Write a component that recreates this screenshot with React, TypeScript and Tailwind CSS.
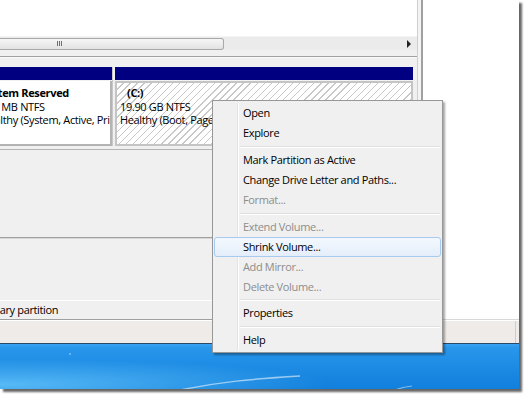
import React from "react";

type Item = { label: string; disabled?: boolean; active?: boolean } | "sep" | "sep6";

const menuItems: Item[] = [
  { label: "Open" },
  { label: "Explore" },
  "sep",
  { label: "Mark Partition as Active" },
  { label: "Change Drive Letter and Paths..." },
  { label: "Format...", disabled: true },
  "sep",
  { label: "Extend Volume...", disabled: true },
  { label: "Shrink Volume...", active: true },
  { label: "Add Mirror...", disabled: true },
  { label: "Delete Volume...", disabled: true },
  "sep6",
  { label: "Properties" },
  "sep",
  { label: "Help" },
];

function Scrollbar() {
  return (
    <div className="h-[14px] bg-[#ebebeb] border-t border-[#f4f4f4] flex items-center">
      <div className="relative w-[224px] h-[12px] rounded-r-[3px] border border-l-0 border-[#a8a8a8] bg-[linear-gradient(180deg,#f6f6f6,#e2e2e2)] flex items-center">
        <div className="ml-[57px] flex gap-[1px]">
          <span className="w-[1px] h-[5px] bg-[#6e6e6e]" />
          <span className="w-[1px] h-[5px] bg-[#6e6e6e]" />
          <span className="w-[1px] h-[5px] bg-[#6e6e6e]" />
        </div>
      </div>
      <div className="ml-auto mr-[6px] w-0 h-0 border-y-[4px] border-y-transparent border-l-[4px] border-l-[#222]" />
    </div>
  );
}

function PartitionRow() {
  return (
    <div className="h-[79px] flex overflow-hidden">
      {/* System Reserved - scrolled partly out of view */}
      <div className="w-[112px] shrink-0 overflow-hidden flex flex-col">
        <div className="-ml-[24px] w-[136px] flex flex-col h-full">
          <div className="h-[13px] bg-[#000080]" />
          <div className="mt-[1px] flex-1 bg-white border-r-2 border-b-2 border-[#b4b4b4] pl-[5px] pt-[5px] leading-[13.5px] whitespace-nowrap overflow-hidden">
            <div className="font-bold">System Reserved</div>
            <div>100 MB NTFS</div>
            <div>Healthy (System, Active, Primary Partition)</div>
          </div>
        </div>
      </div>
      <div className="w-[3px] shrink-0 border-l border-[#c8c8c8]" />
      {/* C: */}
      <div className="w-[298px] shrink-0 flex flex-col">
        <div className="h-[13px] bg-[#000080]" />
        <div className="mt-[1px] flex-1 border-2 border-[#c4c4c4] bg-[image:repeating-linear-gradient(135deg,#ffffff_0px,#ffffff_4px,#c8c8c8_4px,#c8c8c8_5px)] pl-[3px] pt-[3px] leading-[13.5px] whitespace-nowrap overflow-hidden">
          <div className="font-bold pl-[7px]">(C:)</div>
          <div>19.90 GB NTFS</div>
          <div>Healthy (Boot, Page File, Crash Dump, Primary Partition)</div>
        </div>
      </div>
    </div>
  );
}

function DiskPanel() {
  return (
    <div className="flex-1 border-t border-[#a0a0a0] flex flex-col">
      <div className="h-[1px] bg-[#fafafa]" />
      <div className="h-[9px]" />
      <PartitionRow />
      <div className="h-[3px]" />
      <div className="h-[1px] bg-[#b4b4b4]" />
      <div className="h-[87px]" />
      <div className="h-[2px] border-t border-[#a0a0a0] border-b border-b-[#d8d8d8]" />
      <div className="h-[61px]" />
      <div className="h-[1px] bg-white" />
      <div className="h-[18px] flex items-center overflow-hidden whitespace-nowrap">
        <span className="-ml-[23px]">Primary partition</span>
      </div>
      <div className="h-[1px] bg-[#a0a0a0]" />
    </div>
  );
}

function ContextMenu() {
  return (
    <div className="absolute left-[212px] top-[100px] w-[231px] border border-[#979797] bg-[#f0f0f0] px-[1px] py-[2px] shadow-[2px_2px_2px_rgba(0,0,0,0.35)]">
      <div className="absolute left-[24px] top-[2px] bottom-[2px] w-[2px] border-l border-[#e2e3e3] border-r border-r-white" />
      {menuItems.map((it, i) =>
        it === "sep" || it === "sep6" ? (
          <div key={i} className={(it === "sep" ? "h-[7px]" : "h-[6px]") + " flex flex-col justify-center pl-[26px] pr-[1px]"}>
            <div className="h-[1px] bg-[#e0e0e0]" />
            <div className="h-[1px] bg-white" />
          </div>
        ) : (
          <div
            key={i}
            className={
              "relative h-[20px] flex items-center pl-[28px] border rounded-[3px] whitespace-nowrap " +
              (it.active
                ? "border-[#a8caf0] bg-[linear-gradient(180deg,#f3f8fe,#e4eefa)] "
                : "border-transparent ") +
              (it.disabled ? "text-[#8d8d8d]" : "text-black")
            }
          >
            {it.label}
          </div>
        )
      )}
    </div>
  );
}

function Taskbar() {
  return (
    <div className="relative h-[46px] border-t border-[#2a4a68] bg-[image:radial-gradient(ellipse_at_0%_90%,rgba(110,205,255,0.75),transparent_45%),linear-gradient(180deg,#3aa2f2_0px,#2896ea_4px,#117fdc_100%)] overflow-hidden">
      <svg className="absolute inset-0" width="519" height="46" viewBox="0 0 519 46">
        <path d="M180 46 C 220 38, 250 35, 300 32" stroke="rgba(255,255,255,0.55)" strokeWidth="1.5" fill="none" />
        <path d="M395 46 C 400 44, 405 43, 412 42" stroke="rgba(255,255,255,0.45)" strokeWidth="1.2" fill="none" />
        <circle cx="70" cy="10" r="0.8" fill="rgba(255,255,255,0.7)" />
      </svg>
    </div>
  );
}

export default function App() {
  return (
    <div className="w-[524px] h-[394px] bg-white overflow-hidden font-['Open_Sans',sans-serif] text-[11px] tracking-[-0.35px] text-black">
      <div className="relative w-[519px] h-[389px] shadow-[3px_3px_2px_rgba(0,0,0,0.6)] flex flex-col bg-white">
        <div className="flex h-[320px]">
          <div className="w-[417px] flex flex-col bg-[#f0f0f0]">
            <div className="h-[36px] bg-white" />
            <Scrollbar />
            <div className="h-[6px]" />
            <DiskPanel />
          </div>
          <div className="w-[6px] border-l border-[#cfcfcf] border-r-2 border-r-[#a0a0a0] bg-[#f4f4f4]" />
          <div className="flex-1 bg-white border-b border-[#d8d8d8]" />
        </div>
        <div className="h-[23px] bg-[#efebe8] border-t border-white flex">
          <div className="flex-1" />
          <div className="w-[1px] bg-[#d0ccc8]" />
          <div className="w-[3px]" />
        </div>
        <Taskbar />
        <ContextMenu />
      </div>
    </div>
  );
}
